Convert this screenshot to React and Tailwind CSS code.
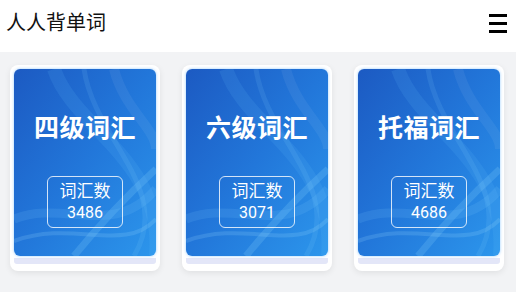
import { useId } from 'react'

const books = [
  { name: '四级词汇', count: 3486 },
  { name: '六级词汇', count: 3071 },
  { name: '托福词汇', count: 4686 },
]

function Swirls() {
  const id = useId()
  return (
    <svg className="absolute inset-0 w-full h-full" viewBox="0 0 142 187" preserveAspectRatio="none">
      <defs>
        <linearGradient id={id + 'g'} x1="0" y1="0" x2="1" y2="1">
          <stop offset="0" stopColor="#1c5ac2" />
          <stop offset="0.5" stopColor="#2277da" />
          <stop offset="1" stopColor="#2c96ec" />
        </linearGradient>
      </defs>
      <rect width="142" height="187" fill={`url(#${id}g)`} />
      <path d="M40 0 C 60 60, 150 90, 142 187" stroke="#6cc8ff" strokeOpacity="0.12" strokeWidth="14" fill="none" />
      <path d="M70 0 C 80 70, 160 120, 120 187" stroke="#8fd8ff" strokeOpacity="0.12" strokeWidth="5" fill="none" />
      <path d="M0 150 C 50 130, 100 170, 142 120" stroke="#7fd0ff" strokeOpacity="0.14" strokeWidth="9" fill="none" />
      <path d="M0 172 C 60 150, 110 185, 142 150" stroke="#9ee0ff" strokeOpacity="0.18" strokeWidth="4" fill="none" />
      <path d="M60 187 C 90 150, 120 120, 142 100" stroke="#8ad6ff" strokeOpacity="0.2" strokeWidth="7" fill="none" />
      <path d="M100 0 C 110 40, 142 60, 142 80" stroke="#ffffff" strokeOpacity="0.06" strokeWidth="10" fill="none" />
    </svg>
  )
}

function BookCard({ name, count }) {
  return (
    <div className="w-[150px] bg-white rounded-[8px] p-[4px] pb-[7px] shadow-[0_2px_6px_rgba(0,0,0,0.08)]">
      <div className="relative h-[187px] rounded-[6px] overflow-hidden shadow-[0_0_3px_rgba(120,190,255,0.8)]">
        <Swirls />
        <div className="relative flex flex-col items-center h-full">
          <div className="mt-[42px] text-white text-[25px] font-bold leading-[36px] tracking-[0.5px]">{name}</div>
          <div className="mt-[29px] w-[76px] h-[52px] border border-white/80 rounded-[6px] flex flex-col items-center justify-center text-white">
            <span className="text-[17px] leading-[22px]">词汇数</span>
            <span className="text-[16px] leading-[22px]">{count}</span>
          </div>
        </div>
      </div>
      <div className="mt-[2px] h-[6px] bg-[#e3e6f8] rounded-b-[3px]" />
    </div>
  )
}

export default function App() {
  return (
    <div className="w-[516px] h-[292px] bg-[#f2f3f5] font-['Roboto','Noto_Sans_CJK_SC',sans-serif]">
      <div className="h-[52px] bg-white flex items-center justify-between pl-[6px] pr-[9px]">
        <h1 className="text-[20px] text-[#111] leading-none -mt-[6px]">人人背单词</h1>
        <div className="flex flex-col gap-[5px] w-[18px] -mt-[6px]">
          <span className="h-[3px] bg-black" />
          <span className="h-[3px] bg-black" />
          <span className="h-[3px] bg-black" />
        </div>
      </div>
      <div className="flex gap-[22px] pl-[10px] pt-[13px]">
        {books.map((b) => (
          <BookCard key={b.name} {...b} />
        ))}
      </div>
    </div>
  )
}
